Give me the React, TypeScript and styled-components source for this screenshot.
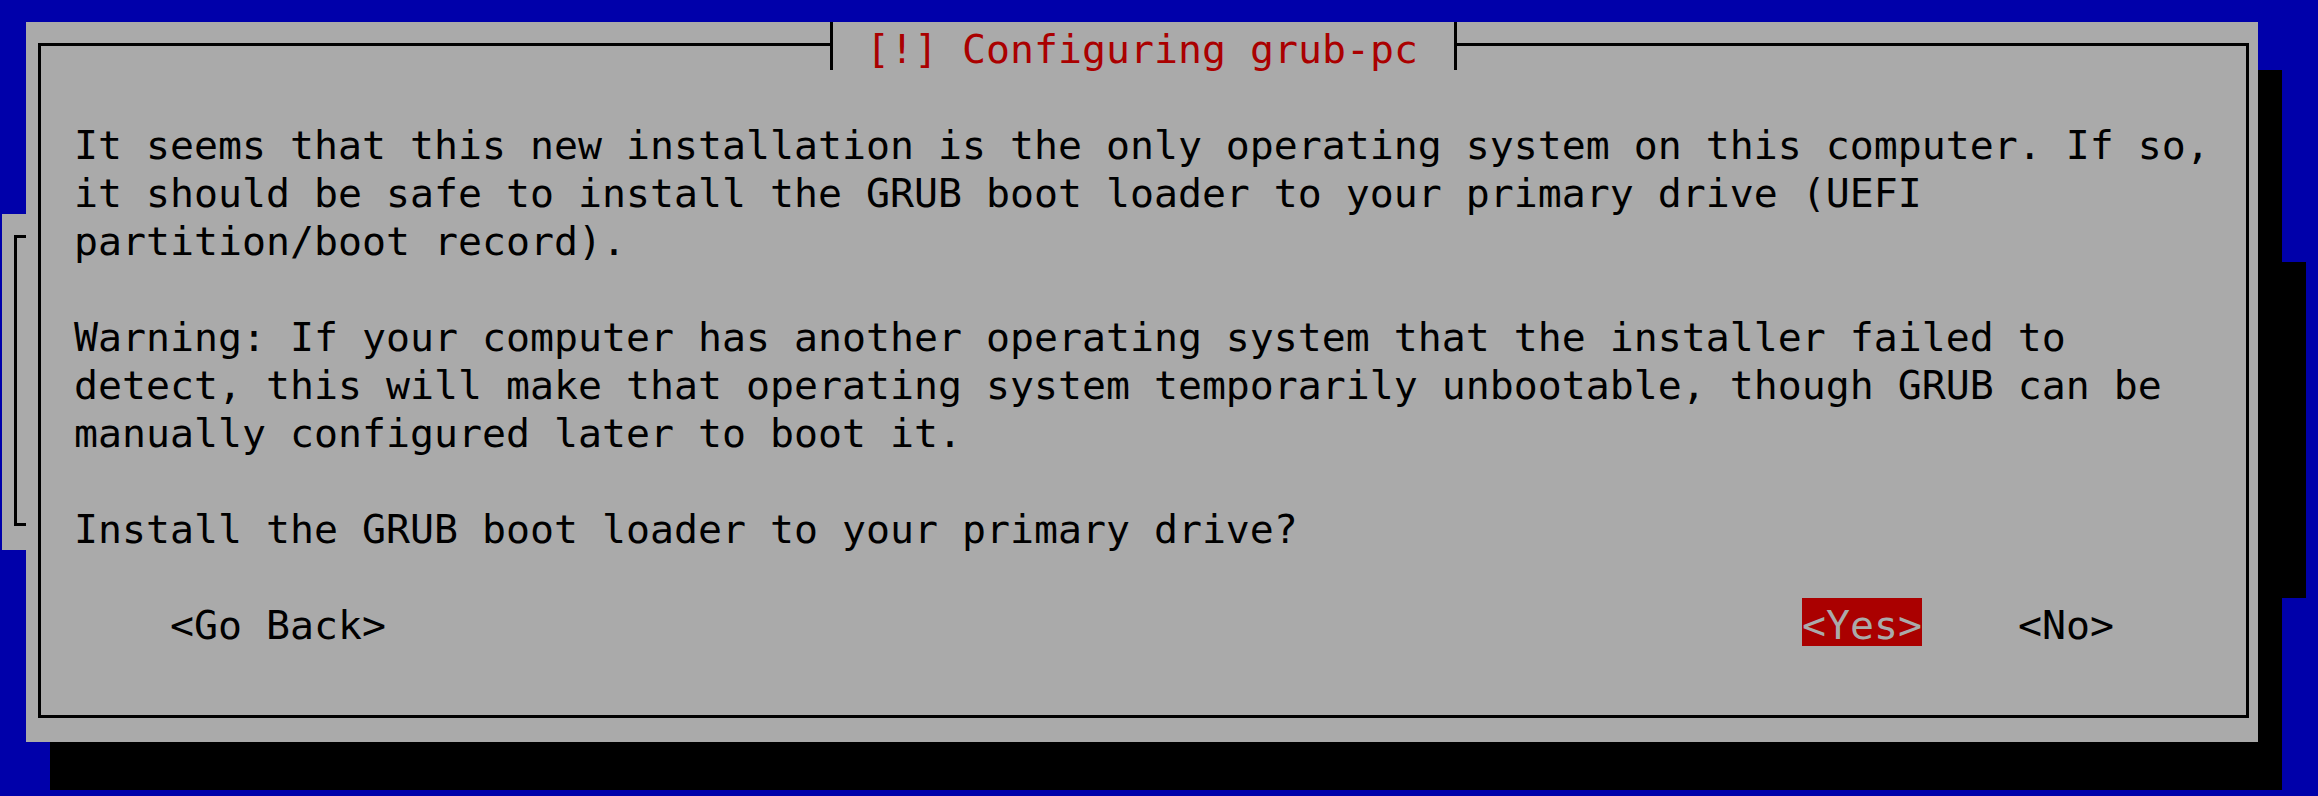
import React from "react";
import styled, { createGlobalStyle } from "styled-components";

const CW = 24;
const CH = 48;

const C = {
  blue: "#0000aa",
  grey: "#aaaaaa",
  red: "#aa0000",
  black: "#000000",
};

const Global = createGlobalStyle`
  html, body {
    margin: 0;
    padding: 0;
    background: ${C.blue};
  }
  body {
    overflow: hidden;
  }
`;

const Screen = styled.div`
  position: relative;
  width: 2318px;
  height: 796px;
  overflow: hidden;
  background: ${C.blue};
  font-family: "DejaVu Sans Mono", "Liberation Mono", monospace;
  font-size: 39.86px;
  color: ${C.black};
`;

const Window = styled.div<{ $col: number; $row: number; $cols: number; $rows: number; $x0: number; $y0: number }>`
  position: absolute;
  left: ${(p) => p.$x0 + p.$col * CW}px;
  top: ${(p) => p.$y0 + p.$row * CH}px;
  width: ${(p) => p.$cols * CW}px;
  height: ${(p) => p.$rows * CH}px;
  box-sizing: border-box;
  padding: 21px 9px 24px 12px;
  display: flex;
  background: ${C.grey};
  box-shadow: ${CW}px ${CH}px 0 0 ${C.black};
`;

const Frame = styled.div`
  flex: 1;
  display: flex;
  flex-direction: column;
  border: 3px solid ${C.black};
  padding: 72px 0 0 33px;
  min-width: 0;
`;

const TitleBar = styled.div`
  position: absolute;
  top: 0;
  left: 0;
  right: 0;
  height: ${CH}px;
  display: flex;
  justify-content: center;
`;

const Tee = styled.div<{ $side: "left" | "right" }>`
  position: relative;
  width: ${CW}px;
  height: ${CH}px;
  background: ${C.grey};
  &::before {
    content: "";
    position: absolute;
    left: 12px;
    top: 0;
    width: 3px;
    height: ${CH}px;
    background: ${C.black};
  }
  &::after {
    content: "";
    position: absolute;
    top: 21px;
    height: 3px;
    left: ${(p) => (p.$side === "left" ? "0" : "12px")};
    width: ${(p) => (p.$side === "left" ? "15px" : "12px")};
    background: ${C.black};
  }
`;

const TitleText = styled.div`
  height: ${CH}px;
  box-sizing: border-box;
  padding-top: 3px;
  line-height: ${CH}px;
  white-space: pre;
  background: ${C.grey};
  color: ${C.red};
`;

const Paragraph = styled.div`
  margin-bottom: ${CH}px;
`;

const Line = styled.div`
  height: ${CH}px;
  box-sizing: border-box;
  padding-top: 3px;
  line-height: ${CH}px;
  white-space: pre;
`;

const ButtonBar = styled.div`
  display: grid;
  grid-template-columns: repeat(88, ${CW}px);
  height: ${CH}px;
`;

const Button = styled.div<{ $col: number; $len: number; $focused?: boolean }>`
  grid-column: ${(p) => p.$col + 1} / span ${(p) => p.$len};
  height: ${CH}px;
  box-sizing: border-box;
  padding-top: 3px;
  line-height: ${CH}px;
  white-space: pre;
  background: ${(p) => (p.$focused ? C.red : "transparent")};
  color: ${(p) => (p.$focused ? C.grey : C.black)};
`;

const X0 = 26;
const Y0 = 22;

const paragraphs = [
  [
    "It seems that this new installation is the only operating system on this computer. If so,",
    "it should be safe to install the GRUB boot loader to your primary drive (UEFI",
    "partition/boot record).",
  ],
  [
    "Warning: If your computer has another operating system that the installer failed to",
    "detect, this will make that operating system temporarily unbootable, though GRUB can be",
    "manually configured later to boot it.",
  ],
  ["Install the GRUB boot loader to your primary drive?"],
];

const buttons = [
  { label: "<Go Back>", col: 4 },
  { label: "<Yes>", col: 72, focused: true },
  { label: "<No>", col: 81 },
];

export default function App() {
  return (
    <>
      <Global />
      <Screen>
        <Window $x0={X0} $y0={Y0} $col={-1} $row={4} $cols={95} $rows={7}>
          <Frame />
        </Window>
        <Window $x0={X0} $y0={Y0} $col={0} $row={0} $cols={93} $rows={15}>
          <Frame>
            {paragraphs.map((lines, i) => (
              <Paragraph key={i}>
                {lines.map((l, j) => (
                  <Line key={j}>{l}</Line>
                ))}
              </Paragraph>
            ))}
            <ButtonBar>
              {buttons.map((b) => (
                <Button key={b.label} $col={b.col} $len={b.label.length} $focused={b.focused}>
                  {b.label}
                </Button>
              ))}
            </ButtonBar>
          </Frame>
          <TitleBar>
            <Tee $side="left" />
            <TitleText>{" [!] Configuring grub-pc "}</TitleText>
            <Tee $side="right" />
          </TitleBar>
        </Window>
      </Screen>
    </>
  );
}
